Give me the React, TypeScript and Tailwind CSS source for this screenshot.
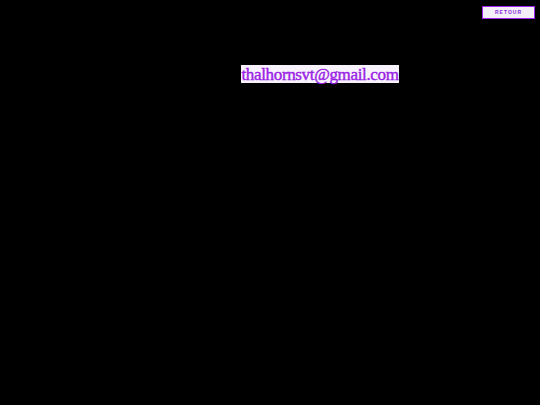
export default function App() {
  return (
    <div className="w-[540px] h-[405px] bg-black relative overflow-hidden">
      <div className="flex justify-end pt-[6px] pr-[5px]">
        <button className="w-[53px] h-[13px] border border-[#a020f0] bg-[#f3eef8] flex items-center justify-center text-[5px] font-bold tracking-[1px] text-[#8a2be2] leading-none" style={{ fontFamily: '"Liberation Sans", Arial, sans-serif' }}>
          RETOUR
        </button>
      </div>
      <div className="flex mt-[46px] pl-[241px]">
        <div className="w-[158px] bg-[#f7f2fb] h-[18px] flex items-center justify-center text-[#9a1ee6] text-[17px] leading-none whitespace-nowrap tracking-[-0.35px] [-webkit-text-stroke:0.4px_#9a1ee6]" style={{ fontFamily: '"Liberation Serif", "Times New Roman", serif' }}>
          thalhornsvt@gmail.com
        </div>
      </div>
    </div>
  );
}
